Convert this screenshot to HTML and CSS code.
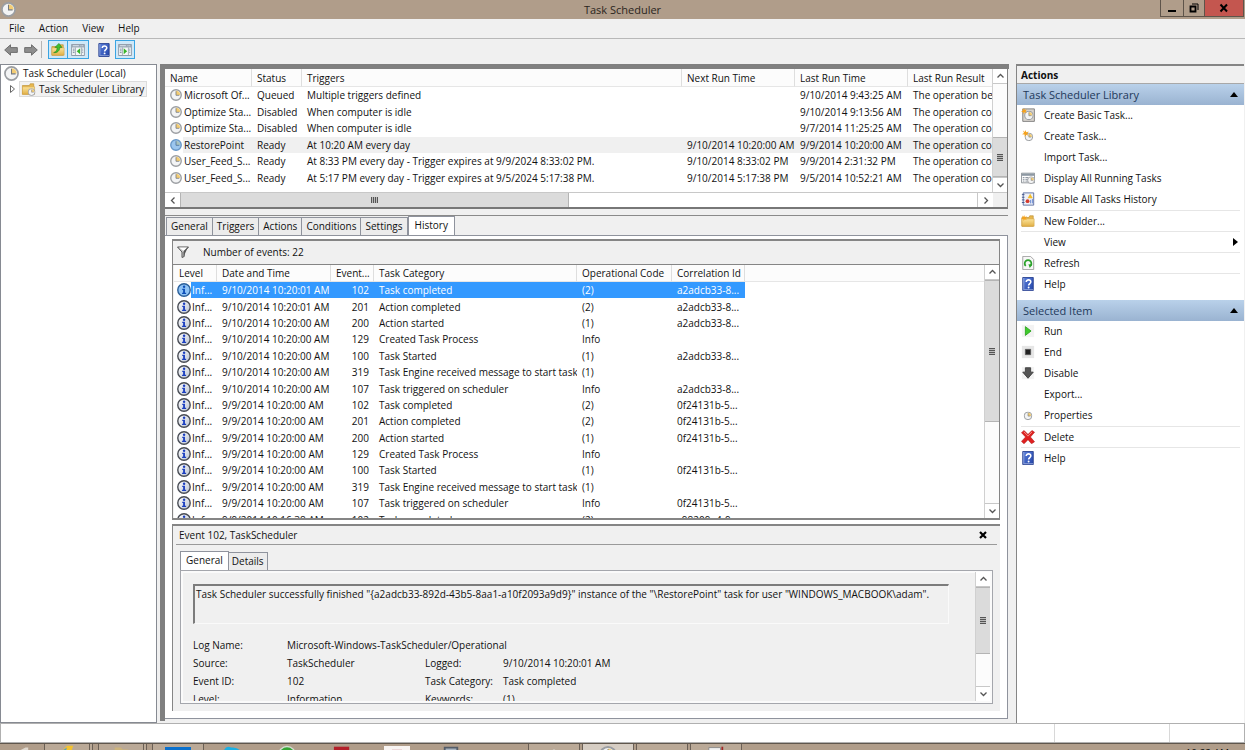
FILE: index.html
```html
<!DOCTYPE html>
<html lang="en">
<head>
<meta charset="utf-8">
<title>Task Scheduler</title>
<link rel="stylesheet" href="styles.css">
</head>
<body>
<svg class="defs" aria-hidden="true">
  <defs>
    <linearGradient id="g-gold" x1="0" y1="0" x2="0" y2="1"><stop offset="0" stop-color="#fbe39a"/><stop offset="1" stop-color="#e2b147"/></linearGradient>
    <linearGradient id="g-blue" x1="0" y1="0" x2="1" y2="1"><stop offset="0" stop-color="#5a7fdc"/><stop offset="1" stop-color="#2445a8"/></linearGradient>
    <linearGradient id="g-info" x1="0" y1="0" x2="1" y2="1"><stop offset="0" stop-color="#fff"/><stop offset="1" stop-color="#b9c2d2"/></linearGradient>
    <symbol id="clock" viewBox="0 0 16 16"><circle cx="8" cy="8" r="7" fill="#f3f4f5" stroke="#9b9ea2" stroke-width="1.8"/><path d="M8 8V2.4A5.6 5.6 0 0 1 13.6 8z" fill="#f3cd74"/><path d="M8 3V8.4H12.4" fill="none" stroke="#77797c" stroke-width="1.1"/></symbol>
    <symbol id="clock-blue" viewBox="0 0 16 16"><circle cx="8" cy="8" r="7" fill="#9cc6ee" stroke="#6797c8" stroke-width="1.8"/><path d="M8 8V2.4A5.6 5.6 0 0 1 13.6 8z" fill="#a9c3c0"/><path d="M8 3V8.4H12.4" fill="none" stroke="#4c7098" stroke-width="1.1"/></symbol>
    <symbol id="info" viewBox="0 0 16 16"><circle cx="8" cy="8" r="7.1" fill="url(#g-info)" stroke="#484c54" stroke-width="1.6"/><path d="M6 6.6H9.1V11.2H10.4V12.6H5.8V11.2H7V7.9H6z" fill="#1b3fc0"/><circle cx="8.1" cy="4.3" r="1.4" fill="#1b3fc0"/></symbol>
    <symbol id="info-sel" viewBox="0 0 16 16"><circle cx="8" cy="8" r="7.1" fill="#8fc3f5" stroke="#2b5f99" stroke-width="1.6"/><path d="M6 6.6H9.1V11.2H10.4V12.6H5.8V11.2H7V7.9H6z" fill="#0e4fb8"/><circle cx="8.1" cy="4.3" r="1.4" fill="#0e4fb8"/></symbol>
    <symbol id="help" viewBox="0 0 14 16"><path d="M1 .5H13V15.5H1z" fill="url(#g-blue)" stroke="#20398c"/><path d="M1.5 1V15H13V13.8H2.8V1z" fill="#c6d2ee" opacity=".5"/><path d="M5 5.6C5 2.4 10.4 2.5 10.2 5.7C10.1 7.6 7.7 7.6 7.7 9.8" fill="none" stroke="#fff" stroke-width="1.8"/><circle cx="7.7" cy="12" r="1.1" fill="#fff"/></symbol>
    <symbol id="folder" viewBox="0 0 16 16"><path d="M1 4H9L10 2H14V14H1z" fill="#e8b84f" stroke="#b98a2c" stroke-width=".7"/><path d="M1 5.5H15V14H1z" fill="url(#g-gold)" stroke="#cfa040" stroke-width=".6"/></symbol>
    <symbol id="star" viewBox="0 0 8 8"><path d="M4 0L5 2.7L8 1.8L6 4L7.5 6.6L4.8 5.6L3.4 8L3 5.4L0 5L2.4 3.6L1.4 .8L3.5 2.4z" fill="#f5a21c"/></symbol>
    <symbol id="up" viewBox="0 0 9 6"><path d="M1.5 4.5L4.5 1.5L7.5 4.5" fill="none" stroke="#555" stroke-width="1.3"/></symbol>
    <symbol id="down" viewBox="0 0 9 6"><path d="M1.5 1.5L4.5 4.5L7.5 1.5" fill="none" stroke="#555" stroke-width="1.3"/></symbol>
    <symbol id="left" viewBox="0 0 6 9"><path d="M4.5 1.5L1.5 4.5L4.5 7.5" fill="none" stroke="#555" stroke-width="1.3"/></symbol>
    <symbol id="right" viewBox="0 0 6 9"><path d="M1.5 1.5L4.5 4.5L1.5 7.5" fill="none" stroke="#555" stroke-width="1.3"/></symbol>
    <symbol id="collapse" viewBox="0 0 8 5"><path d="M0 5L4 0L8 5z" fill="#000"/></symbol>
    <symbol id="back" viewBox="0 0 14 12"><path d="M.7 6L6.5 .8V3.6H13.3V8.4H6.5V11.2z" fill="#8d8d8d" stroke="#6f6f6f"/></symbol>
    <symbol id="pane" viewBox="0 0 16 14"><path d="M.5 .5H15.5V13.5H.5z" fill="#f4f6f8" stroke="#7d8894"/><path d="M1 1H15V4H1z" fill="#9aa8b6"/><path d="M2 2H9M11 2H12M13 2H14" stroke="#e8eef4"/><path d="M5 4V13M12 4V13" stroke="#9aa5b0"/><path d="M2 6H4M2 8H4M2 10H4M13 6H14M13 8H14M13 10H14" stroke="#6d8195"/></symbol>
  </defs>
</svg>

<div class="window">
  <header class="titlebar">
    <svg class="app-icon"><use href="#clock"/></svg>
    <h1 class="window-title">Task Scheduler</h1>
    <div class="window-buttons">
      <button class="wbtn" aria-label="Minimize"><svg viewBox="0 0 10 10" width="10" height="10"><path d="M1 7H9V9H1z"/></svg></button>
      <button class="wbtn wbtn-restore" aria-label="Restore"><svg viewBox="0 0 10 10" width="10" height="10"><path d="M1.5 3.5H6.5V8.5H1.5z" fill="none" stroke="#000" stroke-width="1.8"/><path d="M3 1H9V7" fill="none" stroke="#000"/></svg></button>
      <button class="wbtn wbtn-close" aria-label="Close"><svg viewBox="0 0 10 10" width="10" height="10"><path d="M1.5 1.5L8 8.5M8 1.5L1.5 8.5" stroke="#000" stroke-width="2"/></svg></button>
    </div>
  </header>

  <nav class="menubar">
    <button>File</button><button>Action</button><button>View</button><button>Help</button>
  </nav>

  <div class="toolbar">
    <button class="tool" aria-label="Back"><svg width="14" height="12"><use href="#back"/></svg></button>
    <button class="tool" aria-label="Forward"><svg width="14" height="12" viewBox="0 0 14 12"><path d="M13.3 6L7.5 .8V3.6H.7V8.4H7.5V11.2z" fill="#8d8d8d" stroke="#6f6f6f"/></svg></button>
    <span class="tool-sep"></span>
    <button class="tool tool-on" aria-label="Up one level"><svg width="14" height="14" viewBox="0 0 16 16"><use href="#folder"/><path d="M3 11C6 10 7 8 7 5H4.5L9 .5L12.5 5H10C10 9 7 11.5 3 11z" fill="#3fc02f" stroke="#22861a" stroke-width=".7"/></svg></button>
    <button class="tool tool-on tool-joined" aria-label="Show console tree"><svg width="14" height="12" viewBox="0 0 16 14"><use href="#pane"/><path d="M10.5 5V12L6.5 8.5z" fill="#35b428"/></svg></button>
    <button class="tool tool-help" aria-label="Help"><svg width="12" height="14"><use href="#help"/></svg></button>
    <button class="tool tool-on" aria-label="Show action pane"><svg width="14" height="12" viewBox="0 0 16 14"><use href="#pane"/><path d="M6.5 5V12L10.5 8.5z" fill="#35b428"/></svg></button>
  </div>

  <main class="panes">
    <aside class="tree">
      <div class="tree-root"><svg width="15" height="15"><use href="#clock"/></svg><span>Task Scheduler (Local)</span></div>
      <div class="tree-child">
        <svg class="twisty" width="5" height="8" viewBox="0 0 5 8"><path d="M.5 .5L4.5 4L.5 7.5z" fill="#fff" stroke="#666"/></svg>
        <button class="tree-item"><svg width="15" height="14" viewBox="0 0 16 16"><use href="#folder"/><use href="#clock" x="7" y="7" width="9" height="9"/></svg><span>Task Scheduler Library</span></button>
      </div>
    </aside>

    <section class="center">
      <div class="task-list">
        <div class="list-body">
          <div class="list-view">
            <table class="grid tasks">
              <colgroup><col class="t-name"><col class="t-status"><col class="t-trig"><col class="t-next"><col class="t-last"><col class="t-result"></colgroup>
              <thead><tr><th>Name</th><th>Status</th><th>Triggers</th><th>Next Run Time</th><th>Last Run Time</th><th>Last Run Result</th></tr></thead>
              <tbody>
                <tr><td><div class="lead"><svg><use href="#clock"/></svg><span>Microsoft Of...</span></div></td><td>Queued</td><td>Multiple triggers defined</td><td></td><td>9/10/2014 9:43:25 AM</td><td>The operation bein</td></tr>
                <tr><td><div class="lead"><svg><use href="#clock"/></svg><span>Optimize Sta...</span></div></td><td>Disabled</td><td>When computer is idle</td><td></td><td>9/10/2014 9:13:56 AM</td><td>The operation com</td></tr>
                <tr><td><div class="lead"><svg><use href="#clock"/></svg><span>Optimize Sta...</span></div></td><td>Disabled</td><td>When computer is idle</td><td></td><td>9/7/2014 11:25:25 AM</td><td>The operation com</td></tr>
                <tr class="soft"><td><div class="lead"><svg><use href="#clock-blue"/></svg><span>RestorePoint</span></div></td><td>Ready</td><td>At 10:20 AM every day</td><td>9/10/2014 10:20:00 AM</td><td>9/9/2014 10:20:00 AM</td><td>The operation com</td></tr>
                <tr><td><div class="lead"><svg><use href="#clock"/></svg><span>User_Feed_S...</span></div></td><td>Ready</td><td>At 8:33 PM every day - Trigger expires at 9/9/2024 8:33:02 PM.</td><td>9/10/2014 8:33:02 PM</td><td>9/9/2014 2:31:32 PM</td><td>The operation com</td></tr>
                <tr><td><div class="lead"><svg><use href="#clock"/></svg><span>User_Feed_S...</span></div></td><td>Ready</td><td>At 5:17 PM every day - Trigger expires at 9/5/2024 5:17:38 PM.</td><td>9/10/2014 5:17:38 PM</td><td>9/5/2014 10:52:21 AM</td><td>The operation com</td></tr>
              </tbody>
            </table>
          </div>
          <div class="vscroll">
            <button aria-label="Scroll up"><svg width="9" height="6"><use href="#up"/></svg></button>
            <span class="gap-tasks"></span>
            <span class="thumb thumb-tasks"><i class="grip"></i></span>
            <button aria-label="Scroll down"><svg width="9" height="6"><use href="#down"/></svg></button>
          </div>
        </div>
        <div class="hscroll">
          <button aria-label="Scroll left"><svg width="6" height="9"><use href="#left"/></svg></button>
          <span class="hthumb"><i class="hgrip"></i></span>
          <span class="htrack"></span>
          <button aria-label="Scroll right"><svg width="6" height="9"><use href="#right"/></svg></button>
          <span class="corner"></span>
        </div>
      </div>

      <div class="details">
        <div class="tabs" role="tablist">
          <button role="tab">General</button><button role="tab">Triggers</button><button role="tab">Actions</button><button role="tab">Conditions</button><button role="tab">Settings</button><button role="tab" class="active" aria-selected="true">History</button>
        </div>
        <div class="tabpage">
          <div class="events">
            <div class="events-bar"><svg width="12" height="12" viewBox="0 0 12 12"><path d="M.5 1H11.5L7.2 6V10.5L5 11.5V6z" fill="#cfcfcf" stroke="#555"/><path d="M2 1.4H10L7 5z" fill="#fff"/><path d="M6.6 5V10.6L11 1z" fill="#555"/></svg><span>Number of events: 22</span></div>
            <div class="events-body">
              <div class="list-view">
                <table class="grid history">
                  <colgroup><col class="h-level"><col class="h-date"><col class="h-id"><col class="h-cat"><col class="h-op"><col class="h-corr"><col></colgroup>
                  <thead><tr><th>Level</th><th>Date and Time</th><th>Event...</th><th>Task Category</th><th>Operational Code</th><th>Correlation Id</th><th></th></tr></thead>
                  <tbody>
                    <tr class="picked"><td><div class="lead"><svg><use href="#info-sel"/></svg><span>Inf...</span></div></td><td>9/10/2014 10:20:01 AM</td><td>102</td><td>Task completed</td><td>(2)</td><td>a2adcb33-8...</td><td></td></tr>
                    <tr><td><div class="lead"><svg><use href="#info"/></svg><span>Inf...</span></div></td><td>9/10/2014 10:20:01 AM</td><td>201</td><td>Action completed</td><td>(2)</td><td>a2adcb33-8...</td><td></td></tr>
                    <tr><td><div class="lead"><svg><use href="#info"/></svg><span>Inf...</span></div></td><td>9/10/2014 10:20:00 AM</td><td>200</td><td>Action started</td><td>(1)</td><td>a2adcb33-8...</td><td></td></tr>
                    <tr><td><div class="lead"><svg><use href="#info"/></svg><span>Inf...</span></div></td><td>9/10/2014 10:20:00 AM</td><td>129</td><td>Created Task Process</td><td>Info</td><td></td><td></td></tr>
                    <tr><td><div class="lead"><svg><use href="#info"/></svg><span>Inf...</span></div></td><td>9/10/2014 10:20:00 AM</td><td>100</td><td>Task Started</td><td>(1)</td><td>a2adcb33-8...</td><td></td></tr>
                    <tr><td><div class="lead"><svg><use href="#info"/></svg><span>Inf...</span></div></td><td>9/10/2014 10:20:00 AM</td><td>319</td><td>Task Engine received message to start task</td><td>(1)</td><td></td><td></td></tr>
                    <tr><td><div class="lead"><svg><use href="#info"/></svg><span>Inf...</span></div></td><td>9/10/2014 10:20:00 AM</td><td>107</td><td>Task triggered on scheduler</td><td>Info</td><td>a2adcb33-8...</td><td></td></tr>
                    <tr><td><div class="lead"><svg><use href="#info"/></svg><span>Inf...</span></div></td><td>9/9/2014 10:20:00 AM</td><td>102</td><td>Task completed</td><td>(2)</td><td>0f24131b-5...</td><td></td></tr>
                    <tr><td><div class="lead"><svg><use href="#info"/></svg><span>Inf...</span></div></td><td>9/9/2014 10:20:00 AM</td><td>201</td><td>Action completed</td><td>(2)</td><td>0f24131b-5...</td><td></td></tr>
                    <tr><td><div class="lead"><svg><use href="#info"/></svg><span>Inf...</span></div></td><td>9/9/2014 10:20:00 AM</td><td>200</td><td>Action started</td><td>(1)</td><td>0f24131b-5...</td><td></td></tr>
                    <tr><td><div class="lead"><svg><use href="#info"/></svg><span>Inf...</span></div></td><td>9/9/2014 10:20:00 AM</td><td>129</td><td>Created Task Process</td><td>Info</td><td></td><td></td></tr>
                    <tr><td><div class="lead"><svg><use href="#info"/></svg><span>Inf...</span></div></td><td>9/9/2014 10:20:00 AM</td><td>100</td><td>Task Started</td><td>(1)</td><td>0f24131b-5...</td><td></td></tr>
                    <tr><td><div class="lead"><svg><use href="#info"/></svg><span>Inf...</span></div></td><td>9/9/2014 10:20:00 AM</td><td>319</td><td>Task Engine received message to start task</td><td>(1)</td><td></td><td></td></tr>
                    <tr><td><div class="lead"><svg><use href="#info"/></svg><span>Inf...</span></div></td><td>9/9/2014 10:20:00 AM</td><td>107</td><td>Task triggered on scheduler</td><td>Info</td><td>0f24131b-5...</td><td></td></tr>
                    <tr><td><div class="lead"><svg><use href="#info"/></svg><span>Inf...</span></div></td><td>9/9/2014 10:16:38 AM</td><td>102</td><td>Task completed</td><td>(2)</td><td>c98209e4-9...</td><td></td></tr>
                  </tbody>
                </table>
              </div>
              <div class="vscroll">
                <button aria-label="Scroll up"><svg width="9" height="6"><use href="#up"/></svg></button>
                <span class="thumb thumb-events"><i class="grip"></i></span>
                <span class="track"></span>
                <button aria-label="Scroll down"><svg width="9" height="6"><use href="#down"/></svg></button>
              </div>
            </div>
          </div>

          <div class="preview">
            <div class="preview-head"><h2>Event 102, TaskScheduler</h2><button aria-label="Close preview"><svg width="8" height="8" viewBox="0 0 8 8"><path d="M1 1L7 7M7 1L1 7" stroke="#000" stroke-width="2.2"/></svg></button></div>
            <div class="subtabs" role="tablist"><button role="tab" class="active" aria-selected="true">General</button><button role="tab">Details</button></div>
            <div class="preview-page">
              <div class="preview-text">
                <p class="message">Task Scheduler successfully finished "{a2adcb33-892d-43b5-8aa1-a10f2093a9d9}" instance of the "\RestorePoint" task for user "WINDOWS_MACBOOK\adam".</p>
                <dl class="facts">
                  <dt>Log Name:</dt><dd class="wide">Microsoft-Windows-TaskScheduler/Operational</dd>
                  <dt>Source:</dt><dd>TaskScheduler</dd><dt>Logged:</dt><dd>9/10/2014 10:20:01 AM</dd>
                  <dt>Event ID:</dt><dd>102</dd><dt>Task Category:</dt><dd>Task completed</dd>
                  <dt>Level:</dt><dd>Information</dd><dt>Keywords:</dt><dd>(1)</dd>
                </dl>
              </div>
              <div class="vscroll">
                <button aria-label="Scroll up"><svg width="9" height="6"><use href="#up"/></svg></button>
                <span class="thumb thumb-preview"><i class="grip"></i></span>
                <span class="track"></span>
                <button aria-label="Scroll down"><svg width="9" height="6"><use href="#down"/></svg></button>
              </div>
            </div>
          </div>
        </div>
      </div>
    </section>

    <aside class="actions">
      <h2 class="actions-title">Actions</h2>
      <h3 class="group-head"><span>Task Scheduler Library</span><svg width="8" height="5"><use href="#collapse"/></svg></h3>
      <ul class="group">
        <li><button><svg viewBox="0 0 16 16"><path d="M2 1H15.3V15.3H2z" fill="#d8d4ce" stroke="#777"/><use href="#clock" x="3.5" y="3" width="11" height="11"/><use href="#star" width="7" height="7"/></svg><span>Create Basic Task...</span></button></li>
        <li><button><svg viewBox="0 0 16 16"><use href="#clock" x="4" y="4" width="10" height="10"/><use href="#star" x="1" y="1" width="8" height="8"/></svg><span>Create Task...</span></button></li>
        <li><button><svg viewBox="0 0 16 16"></svg><span>Import Task...</span></button></li>
        <li><button><svg viewBox="0 0 16 16"><path d="M.5 2.5H15.5V13.5H.5z" fill="#fff" stroke="#82898f"/><path d="M1 3H15V5.5H1z" fill="#8d98a3"/><path d="M2 7.5H4M5 7.5H8M2 9.5H4M5 9.5H8M2 11.5H4M5 11.5H8" stroke="#7a8590"/><use href="#clock" x="7" y="6" width="9" height="9"/></svg><span>Display All Running Tasks</span></button></li>
        <li><button><svg viewBox="0 0 16 16"><path d="M2.5 1H14.5V15H2.5z" fill="#eef1f8" stroke="#55689c"/><path d="M1 3H4M1 6H4M1 9H4M1 12H4" stroke="#3c4f86"/><path d="M10.5 2L13.5 7H7.5z" fill="#f3bd2a"/><circle cx="7.5" cy="10.5" r="2.2" fill="#d43a2d"/><path d="M11 9V13M13 8V13" stroke="#5a7fd0"/></svg><span>Disable All Tasks History</span></button></li>
        <li class="sep"><button><svg viewBox="0 0 16 16"><use href="#folder"/><use href="#star" x="0" y="1" width="7" height="7"/></svg><span>New Folder...</span></button></li>
        <li class="sep"><button><svg viewBox="0 0 16 16"></svg><span>View</span><svg class="submenu" viewBox="0 0 5 8"><path d="M0 0L5 4L0 8z"/></svg></button></li>
        <li class="sep"><button><svg viewBox="0 0 16 16"><path d="M2 .5H11L14.5 4V15.5H2z" fill="#f7f7f7" stroke="#9a9a9a"/><path d="M5.5 11.4A3.8 3.8 0 1 1 10.6 11.4" fill="none" stroke="#2ba22b" stroke-width="2"/><path d="M8.5 9.4L13 9.8L10 13.6z" fill="#2ba22b"/></svg><span>Refresh</span></button></li>
        <li class="sep"><button><svg viewBox="0 0 14 16"><use href="#help"/></svg><span>Help</span></button></li>
      </ul>
      <h3 class="group-head"><span>Selected Item</span><svg width="8" height="5"><use href="#collapse"/></svg></h3>
      <ul class="group">
        <li><button><svg viewBox="0 0 16 16"><path d="M1 1H15V15H1z" fill="#f3f3f3"/><path d="M5 3L11.5 8L5 13z" fill="#3ecb2c" stroke="#2da31f"/></svg><span>Run</span></button></li>
        <li><button><svg viewBox="0 0 16 16"><path d="M1 1H15V15H1z" fill="#e6e6e6"/><path d="M5 5H11V11H5z" fill="#222" stroke="#555"/></svg><span>End</span></button></li>
        <li><button><svg viewBox="0 0 16 16"><path d="M1 1H15V15H1z" fill="#f3f3f3"/><path d="M5 2H11V7H14L8 14L2 7H5z" fill="#555" stroke="#3d3d3d"/></svg><span>Disable</span></button></li>
        <li><button><svg viewBox="0 0 16 16"></svg><span>Export...</span></button></li>
        <li><button><svg viewBox="0 0 16 16"><use href="#clock" x="3" y="4" width="10" height="10"/></svg><span>Properties</span></button></li>
        <li class="sep"><button><svg viewBox="0 0 16 16"><path d="M3.5 .5L8 5L12.5 .5L15.5 2.5L10.8 8L15.5 13.5L12 15.8L8 11L3.5 15.8L.5 13L5.2 8L.5 3z" fill="#e02020" stroke="#a81515" stroke-width=".6"/><path d="M3.3 2.2L8 7L12.6 2.2" fill="none" stroke="#f59a90"/></svg><span>Delete</span></button></li>
        <li class="sep"><button><svg viewBox="0 0 14 16"><use href="#help"/></svg><span>Help</span></button></li>
      </ul>
    </aside>
  </main>

  <footer class="statusbar"><span class="status-main"></span><span class="status-a"></span><span class="status-b"></span></footer>
</div>

<div class="taskbar">
  <div class="slots">
    <span class="slot w-start"><svg viewBox="0 0 20 20"><path d="M5 9L15 4H18V12z" fill="#e0d8ce"/></svg></span>
    <span class="slot open stacked"><svg viewBox="0 0 20 20"><path d="M4 8L10 2L17 2L14 10z" fill="#f2c230"/><path d="M4 8L10 4L8 9z" fill="#4b9cd8"/></svg></span>
    <span class="slot open stacked"><svg viewBox="0 0 20 20"><path d="M3 4H10L12 6H18V20H3z" fill="#cdb47c"/></svg></span>
    <span class="slot open w-50"><svg class="big" viewBox="0 0 26 20"><path d="M0 3H26V20H0z" fill="#0a70cc"/></svg></span>
    <span class="slot w-50"><svg viewBox="0 0 20 20"><path d="M1 7Q4 1 9 4Q15 3 19 7V20H1z" fill="#1bb0e4"/></svg></span>
    <span class="slot w-60"><svg viewBox="0 0 20 20"><circle cx="10" cy="12" r="10" fill="#d5ddd3"/><circle cx="10" cy="12" r="8.5" fill="#35a535"/></svg></span>
    <span class="slot w-50"><svg viewBox="0 0 20 20"><path d="M1 3H18V20H1z" fill="#b3202a"/></svg></span>
    <span class="slot w-60"><svg class="big" viewBox="0 0 26 20"><path d="M0 2H26V20H0z" fill="#f8f4f2"/><path d="M8 6H18" stroke="#e3bcc1" stroke-width="1"/></svg></span>
    <span class="slot w-40"><svg viewBox="0 0 20 20"><path d="M3 4H17V20H3z" fill="#a9b4c0" stroke="#545c68" stroke-width="2"/></svg></span>
    <span class="slot w-50 blank"></span>
    <span class="slot open w-50"><svg viewBox="0 0 20 20"><path d="M8 7L10 5.5L12 7z" fill="#d2cbc4"/></svg></span>
    <span class="slot open current w-50"><svg viewBox="0 0 20 20"><use href="#clock" width="20" height="20" y="2"/></svg></span>
    <span class="slot open w-50"></span>
    <span class="slot open w-50"><svg viewBox="0 0 20 20"><path d="M2 4H15V20H2z" fill="#f2f2f2" stroke="#888"/><path d="M17 3V9" stroke="#a02828" stroke-width="2"/></svg></span>
  </div>
  <time class="clock-text">10:22 AM</time>
</div>
</body>
</html>
```

FILE: styles.css
```css
* { box-sizing: border-box; }

body {
  margin: 0;
  height: 100vh;
  display: flex;
  flex-direction: column;
  overflow: hidden;
  background: #f0f0f0;
  color: #111;
  font-family: "Open Sans", "Noto Sans", sans-serif;
  font-size: 10px;
  line-height: 16px;
}

h1, h2, h3, p, ul, dl, dd { margin: 0; padding: 0; font-size: inherit; font-weight: 400; }
ul { list-style: none; }
button { margin: 0; padding: 0; border: 0; background: none; color: inherit; font: inherit; white-space: nowrap; }
svg { display: block; flex: none; }
.defs { position: absolute; width: 0; height: 0; }

.window { flex: 1; min-height: 0; display: flex; flex-direction: column; }

/* Title bar */
.titlebar { display: grid; grid-template-columns: 1fr auto 1fr; height: 19px; background: #b09d8a; }
.app-icon { width: 15px; height: 15px; margin: 2px 0 0 1px; }
.window-title { font-size: 11px; line-height: 19px; color: #2b2621; }
.window-buttons { display: flex; justify-self: end; height: 17px; margin-right: 1px; border: 1px solid #5e544a; border-top: 0; }
.wbtn { width: 22px; display: flex; align-items: center; justify-content: center; }
.wbtn-restore { width: 22px; border-left: 1px solid #5e544a; border-right: 1px solid #5e544a; }
.wbtn-close { width: 38px; background: #c4564f; }

/* Menu and toolbar */
.menubar { display: flex; gap: 14px; height: 20px; padding: 0 0 1px 9px; border-bottom: 1px solid #b8b8b8; }
.toolbar { display: flex; align-items: center; height: 25px; padding: 0 0 4px 1px; }
.tool { width: 20px; height: 19px; display: flex; align-items: center; justify-content: center; }
.tool-sep { width: 1px; height: 17px; margin: 0 6px 0 0; background: #b5b5b5; }
.tool-on { width: 20px; border: 1px solid #3aa5e3; background: #cfe8f8; }
.tool-joined { width: 21px; border-left: 0; }
.tool-help { width: 14px; margin: 0 4px 0 8px; }

/* Panes */
.panes { flex: 1; min-height: 0; display: flex; }
.tree { flex: 0 0 157px; border: 1px solid #868a92; background: #fff; padding: 0 0 0 3px; }
.tree-root { display: flex; align-items: center; gap: 4px; height: 16px; }
.tree-child { display: flex; align-items: center; gap: 4px; padding-left: 6px; }
.tree-item { display: flex; align-items: center; gap: 3px; height: 16px; padding: 0 2px 0 1px; border: 1px solid #dcdcdc; background: #f2f2f2; }

.center {
  flex: 1; min-width: 0; display: flex; flex-direction: column; gap: 6px;
  margin: 0 7px 2px 3px; padding: 0 1px 2px 0;
  border-top: 5px solid #808080; border-left: 5px solid #808080;
}

/* Lists */
.task-list { display: flex; flex-direction: column; height: 140px; border-bottom: 2px solid #777; border-right: 1px solid #808080; background: #fff; }
.list-body, .events-body { flex: 1; min-height: 0; display: flex; }
.list-view { flex: 1; min-width: 0; overflow: hidden; background: #fff; }
.grid { width: 100%; table-layout: fixed; border-collapse: separate; border-spacing: 0; }
.grid th, .grid td { height: 16px; padding: 0 0 0 5px; overflow: hidden; text-align: left; font-weight: 400; white-space: nowrap; line-height: 16px; }
.grid th { border-right: 1px solid #dedede; border-bottom: 1px solid #e6e6e6; background: #fcfcfc; }
.grid th:last-child { border-right: 0; }
.lead { display: flex; align-items: center; }
.lead span { flex: 1; padding-left: 1px; }
.lead svg { width: 12px; height: 12px; margin-right: 1px; }

.tasks { height: 117px; }
.tasks th { height: 18px; }
.t-name { width: 87px; }
.t-status { width: 50px; }
.t-trig { width: 380px; }
.t-next { width: 113px; }
.t-last { width: 113px; }
.soft td, .soft .lead span { background: #f0f0f0; }
.soft td:first-child { background: #fff; }

.history { height: 263px; }
.history th { height: 17px; }
.h-level { width: 43px; }
.h-date { width: 114px; }
.h-id { width: 43px; }
.h-cat { width: 203px; }
.h-op { width: 95px; }
.h-corr { width: 73px; }
.history td:first-child { padding-left: 3px; }
.history .lead svg { width: 14px; height: 14px; margin: 0; }
.history td:nth-child(3) { padding-right: 5px; text-align: right; }
.picked td, .picked .lead span { background: #3399ff; color: #fff; }
.picked td:first-child, .picked td:last-child { background: #fff; }

/* Scroll bars */
.vscroll { flex: 0 0 15px; display: flex; flex-direction: column; border-left: 1px solid #d0d0d0; background: #fcfcfc; }
.vscroll button { flex: 0 0 15px; display: flex; align-items: center; justify-content: center; border-bottom: 1px solid #c8c8c8; background: #fff; }
.vscroll button:last-child { border-top: 1px solid #c8c8c8; border-bottom: 0; }
.thumb { display: flex; align-items: center; justify-content: center; border: solid #b4b4b4; border-width: 1px 0; background: #dbdbdb; }
.grip { width: 6px; height: 7px; background: repeating-linear-gradient(#555 0 1px, #bbb 1px 2px); }
.gap-tasks { flex: 1; }
.thumb-tasks { flex: 0 0 40px; }
.track { flex: 1; }
.thumb-events { flex: 0 0 142px; }
.thumb-preview { flex: 0 0 67px; }
.hscroll { display: flex; height: 15px; border-top: 1px solid #c8c8c8; }
.hscroll button { flex: 0 0 15px; display: flex; align-items: center; justify-content: center; }
.hthumb { flex: 0 0 389px; display: flex; align-items: center; justify-content: center; border: solid #b4b4b4; border-width: 0 1px; background: #dbdbdb; }
.hgrip { width: 7px; height: 6px; background: repeating-linear-gradient(90deg, #555 0 1px, #bbb 1px 2px); }
.htrack { flex: 1; border-right: 1px solid #c8c8c8; }
.corner { flex: 0 0 14px; background: #f0f0f0; }

/* Task details */
.details { flex: 1; min-height: 0; display: flex; flex-direction: column; border-top: 1px solid #8a8a8a; }
.tabs { display: flex; align-items: flex-end; height: 19px; padding-left: 1px; }
.tabs button, .subtabs button { height: 18px; padding: 0 4px; border: 1px solid #8f939d; border-bottom: 0; background: #ececec; line-height: 15px; }
.tabs button + button { border-left: 0; }
.tabs .active { height: 20px; margin-bottom: -1px; padding: 0 6px 2px; border-left: 1px solid #8f939d; background: #fff; }
.tabpage { flex: 1; min-height: 0; display: flex; flex-direction: column; gap: 4px; padding: 3px 7px 7px; border: 1px solid #8f939d; border-left: 0; background: #fff; }
.events { flex: 1; min-height: 0; display: flex; flex-direction: column; border: 1px solid #858585; border-top-width: 2px; border-bottom-width: 2px; background: #f0f0f0; }
.events-bar { display: flex; align-items: center; gap: 14px; height: 23px; padding: 0 0 1px 4px; }
.events-body { border-top: 1px solid #858585; padding-left: 1px; }

.preview { display: flex; flex-direction: column; height: 187px; padding: 0 7px 7px; border: solid #858585; border-width: 2px 0 0 1px; background: #f0f0f0; }
.preview-head { display: flex; justify-content: space-between; align-items: center; height: 19px; margin: 0 -4px; padding: 0 10px 0 3px; border-bottom: 1px solid #9a9a9a; }
.subtabs { display: flex; align-items: flex-end; height: 25px; }
.subtabs button { height: 18px; padding: 0 3px; }
.subtabs button + button { border-left: 0; }
.subtabs .active { height: 20px; margin-bottom: -1px; padding: 0 5px 2px; border-left: 1px solid #8f939d; background: #fff; }
.preview-page { flex: 1; min-height: 0; display: flex; padding: 1px 2px 2px; border: 1px solid #a4a6ac; box-shadow: inset 0 0 0 2px #fafafa; }
.preview-text { flex: 1; min-width: 0; overflow: hidden; padding: 12px 26px 0 10px; }
.message { height: 40px; padding: 0 1px; border: 1px solid #fafafa; border-top: 2px solid #7c7c7c; border-left: 2px solid #7c7c7c; }
.facts { display: grid; grid-template-columns: 94px 138px 78px 1fr; grid-auto-rows: 18px; line-height: 18px; padding-top: 12px; }
.wide { grid-column: span 3; }

/* Actions */
.actions { flex: 0 0 228px; margin-right: 1px; border: solid #858585; border-width: 2px 0 0 1px; background: #fff; }
.actions-title { height: 18px; padding-left: 4px; border-bottom: 1px solid #a8a8a8; background: #f0f0f0; font-weight: 700; line-height: 18px; }
.group-head { display: flex; align-items: center; justify-content: space-between; height: 21px; padding: 0 6px 0 6px; background: linear-gradient(#b9d1ea, #9ab3d1); color: #1e395b; font-size: 11px; }
.group { margin-bottom: 6px; padding: 0 4px; }
.group li { height: 21px; }
.group .sep { border-top: 1px solid #e6e6e6; }
.group button { display: flex; align-items: center; gap: 9px; width: 100%; height: 20px; }
.group button svg { width: 14px; height: 14px; }
.group button .submenu { width: 5px; height: 8px; margin: 0 2px 0 auto; }

/* Status bar and taskbar */
.statusbar { display: flex; height: 20px; border: 1px solid #b0b0b0; background: #fff; }
.status-main { flex: 1; }
.status-a { flex: 0 0 115px; border-left: 1px solid #d8d8d8; }
.status-b { flex: 0 0 75px; border-left: 1px solid #d8d8d8; }
.taskbar { flex: 0 0 7px; display: flex; justify-content: space-between; overflow: hidden; border-top: 1px solid #5f564c; background: #b09d8a; }
.slots { display: flex; gap: 2px; }
.slot { display: flex; justify-content: center; height: 40px; }
.slot svg { width: 18px; height: 18px; }
.slot .big { width: 26px; height: 20px; }
.open { border: 1px solid #6b6056; border-top: 0; background: #baa997; }
.stacked { width: 46px; margin-right: 6px; box-shadow: 2px 0 0 #baa997, 3px 0 0 #6b6056; }
.current { background: #d6cdc3; }
.w-start { width: 42px; }
.w-50 { width: 52px; }
.w-60 { width: 54px; }
.w-40 { width: 50px; }
.blank { width: 48px; }
.clock-text { padding: 0 16px 0 0; line-height: 18px; color: #111; }
```
